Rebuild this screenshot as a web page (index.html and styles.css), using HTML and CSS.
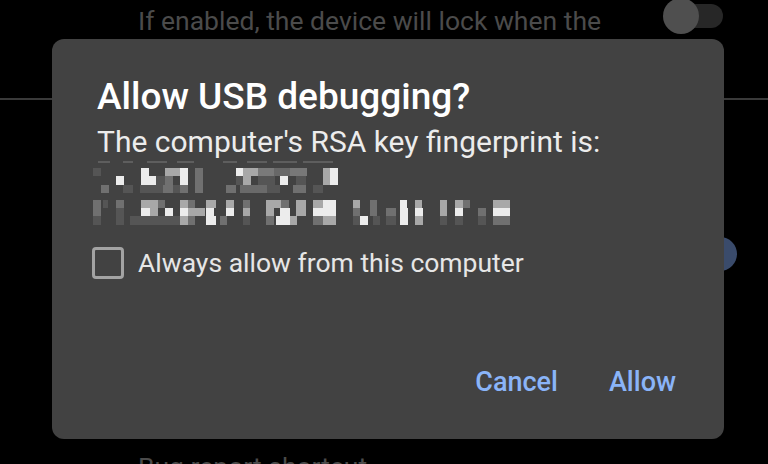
FILE: index.html
```html
<!DOCTYPE html>
<html lang="en">
<head>
<meta charset="utf-8">
<title>Allow USB debugging?</title>
<link rel="stylesheet" href="styles.css">
</head>
<body>
<div class="screen">
  <div class="settings">
    <div class="row-lock">
      <span class="bg-text lock-text">If enabled, the device will lock when the</span>
      <span class="toggle"><span class="track"></span><span class="thumb"></span></span>
    </div>
    <div class="divider"></div>
    <div class="row-circle"><span class="blue-dot"></span></div>
    <div class="row-bug"><span class="bg-text">Bug report shortcut</span></div>
  </div>

  <div class="dialog" role="dialog">
    <h1 class="title">Allow USB debugging?</h1>
    <p class="subtitle">The computer's RSA key fingerprint is:</p>
    <svg class="mosaic" width="420" height="68" viewBox="0 0 420 68" aria-hidden="true">
      <g fill="#5e5e5e">
        <rect x="5" y="3" width="12" height="2"/><rect x="30" y="3" width="10" height="2"/><rect x="54" y="3" width="20" height="2"/><rect x="84" y="3" width="17" height="2"/><rect x="130" y="3" width="14" height="2"/><rect x="154" y="3" width="20" height="2"/><rect x="180" y="3" width="24" height="2"/><rect x="210" y="3" width="30" height="2"/>
      </g>
      <!-- line 1 -->
      <g>
        <rect x="0" y="10" width="8" height="8" fill="#555"/>
        <rect x="48" y="10" width="8" height="8" fill="#ececec"/>
        <rect x="72" y="10" width="8" height="8" fill="#a8a8a8"/>
        <rect x="80" y="10" width="7" height="8" fill="#a8a8a8"/>
        <rect x="87" y="10" width="8" height="8" fill="#ececec"/>
        <rect x="102" y="10" width="8" height="8" fill="#707070"/>
        <rect x="143" y="10" width="7" height="8" fill="#ececec"/>
        <rect x="150" y="10" width="8" height="8" fill="#a8a8a8"/>
        <rect x="158" y="10" width="7" height="8" fill="#a8a8a8"/>
        <rect x="165" y="10" width="16" height="8" fill="#7a7a7a"/>
        <rect x="181" y="10" width="16" height="8" fill="#686868"/>
        <rect x="197" y="10" width="17" height="8" fill="#787878"/>
        <rect x="230" y="10" width="7" height="8" fill="#a8a8a8"/>
        <rect x="237" y="10" width="8" height="8" fill="#ececec"/>

        <rect x="23" y="18" width="8" height="9" fill="#ececec"/>
        <rect x="48" y="18" width="15" height="9" fill="#ececec"/>
        <rect x="63" y="18" width="9" height="9" fill="#555"/>
        <rect x="72" y="18" width="8" height="9" fill="#707070"/>
        <rect x="87" y="18" width="8" height="9" fill="#ececec"/>
        <rect x="102" y="18" width="8" height="9" fill="#707070"/>
        <rect x="143" y="18" width="7" height="9" fill="#555"/>
        <rect x="150" y="18" width="8" height="9" fill="#a8a8a8"/>
        <rect x="165" y="18" width="17" height="9" fill="#555"/>
        <rect x="187" y="18" width="8" height="9" fill="#ececec"/>
        <rect x="203" y="18" width="10" height="9" fill="#555"/>
        <rect x="230" y="18" width="7" height="9" fill="#a8a8a8"/>
        <rect x="237" y="18" width="8" height="9" fill="#ececec"/>

        <rect x="8" y="27" width="8" height="8" fill="#707070"/>
        <rect x="30" y="27" width="10" height="8" fill="#555"/>
        <rect x="47" y="27" width="23" height="8" fill="#555"/>
        <rect x="70" y="27" width="10" height="8" fill="#707070"/>
        <rect x="80" y="27" width="7" height="8" fill="#555"/>
        <rect x="87" y="27" width="8" height="8" fill="#707070"/>
        <rect x="102" y="27" width="8" height="8" fill="#707070"/>
        <rect x="133" y="27" width="10" height="8" fill="#707070"/>
        <rect x="147" y="27" width="27" height="8" fill="#6a6a6a"/>
        <rect x="174" y="27" width="13" height="8" fill="#555"/>
        <rect x="200" y="27" width="13" height="8" fill="#707070"/>
        <rect x="220" y="27" width="10" height="8" fill="#555"/>
      </g>
      <!-- line 2 -->
      <g>
        <rect x="0" y="42" width="8" height="8" fill="#707070"/>
        <rect x="10" y="42" width="5" height="8" fill="#555"/>
        <rect x="23" y="42" width="8" height="8" fill="#707070"/>
        <rect x="48" y="42" width="17" height="8" fill="#a8a8a8"/>
        <rect x="65" y="42" width="7" height="8" fill="#707070"/>
        <rect x="87" y="42" width="8" height="8" fill="#a8a8a8"/>
        <rect x="95" y="42" width="7" height="8" fill="#707070"/>
        <rect x="113" y="42" width="10" height="8" fill="#a8a8a8"/>
        <rect x="133" y="42" width="8" height="8" fill="#a8a8a8"/>
        <rect x="150" y="42" width="7" height="8" fill="#707070"/>
        <rect x="173" y="42" width="15" height="8" fill="#a8a8a8"/>
        <rect x="188" y="42" width="8" height="8" fill="#707070"/>
        <rect x="203" y="42" width="10" height="8" fill="#a8a8a8"/>
        <rect x="220" y="42" width="10" height="8" fill="#a8a8a8"/>
        <rect x="230" y="42" width="13" height="8" fill="#ececec"/>
        <rect x="260" y="42" width="7" height="8" fill="#a8a8a8"/>
        <rect x="277" y="42" width="7" height="8" fill="#707070"/>
        <rect x="307" y="42" width="7" height="8" fill="#ececec"/>
        <rect x="322" y="42" width="7" height="8" fill="#a8a8a8"/>
        <rect x="347" y="42" width="7" height="8" fill="#a8a8a8"/>
        <rect x="362" y="42" width="8" height="8" fill="#a8a8a8"/>
        <rect x="370" y="42" width="7" height="8" fill="#707070"/>
        <rect x="400" y="42" width="17" height="8" fill="#a8a8a8"/>

        <rect x="0" y="50" width="8" height="8" fill="#707070"/>
        <rect x="23" y="50" width="8" height="8" fill="#555"/>
        <rect x="48" y="50" width="9" height="8" fill="#ececec"/>
        <rect x="57" y="50" width="8" height="8" fill="#a8a8a8"/>
        <rect x="72" y="50" width="8" height="8" fill="#ececec"/>
        <rect x="87" y="50" width="8" height="8" fill="#ececec"/>
        <rect x="95" y="50" width="17" height="8" fill="#a8a8a8"/>
        <rect x="113" y="50" width="8" height="8" fill="#ececec"/>
        <rect x="133" y="50" width="8" height="8" fill="#ececec"/>
        <rect x="150" y="50" width="7" height="8" fill="#a8a8a8"/>
        <rect x="173" y="50" width="8" height="8" fill="#a8a8a8"/>
        <rect x="187" y="50" width="10" height="8" fill="#ececec"/>
        <rect x="203" y="50" width="10" height="8" fill="#a8a8a8"/>
        <rect x="220" y="50" width="23" height="8" fill="#ececec"/>
        <rect x="260" y="50" width="7" height="8" fill="#707070"/>
        <rect x="277" y="50" width="7" height="8" fill="#707070"/>
        <rect x="293" y="50" width="10" height="8" fill="#707070"/>
        <rect x="307" y="50" width="8" height="8" fill="#ececec"/>
        <rect x="322" y="50" width="8" height="8" fill="#ececec"/>
        <rect x="347" y="50" width="7" height="8" fill="#a8a8a8"/>
        <rect x="362" y="50" width="8" height="8" fill="#ececec"/>
        <rect x="385" y="50" width="8" height="8" fill="#707070"/>
        <rect x="400" y="50" width="17" height="8" fill="#ececec"/>

        <rect x="0" y="58" width="8" height="9" fill="#555"/>
        <rect x="23" y="58" width="8" height="9" fill="#555"/>
        <rect x="37" y="58" width="50" height="9" fill="#555"/>
        <rect x="87" y="58" width="8" height="9" fill="#a8a8a8"/>
        <rect x="95" y="58" width="7" height="9" fill="#707070"/>
        <rect x="113" y="58" width="10" height="9" fill="#ececec"/>
        <rect x="127" y="58" width="7" height="9" fill="#707070"/>
        <rect x="150" y="58" width="7" height="9" fill="#555"/>
        <rect x="173" y="58" width="8" height="9" fill="#707070"/>
        <rect x="183" y="58" width="14" height="9" fill="#ececec"/>
        <rect x="197" y="58" width="7" height="9" fill="#a8a8a8"/>
        <rect x="220" y="58" width="10" height="9" fill="#707070"/>
        <rect x="230" y="58" width="13" height="9" fill="#a8a8a8"/>
        <rect x="260" y="58" width="7" height="9" fill="#555"/>
        <rect x="267" y="58" width="8" height="9" fill="#ececec"/>
        <rect x="280" y="58" width="7" height="9" fill="#555"/>
        <rect x="293" y="58" width="10" height="9" fill="#555"/>
        <rect x="307" y="58" width="8" height="9" fill="#ececec"/>
        <rect x="322" y="58" width="8" height="9" fill="#a8a8a8"/>
        <rect x="347" y="58" width="7" height="9" fill="#555"/>
        <rect x="362" y="58" width="8" height="9" fill="#555"/>
        <rect x="385" y="58" width="8" height="9" fill="#555"/>
        <rect x="400" y="58" width="17" height="9" fill="#707070"/>
      </g>
    </svg>
    <label class="check-row">
      <span class="checkbox"></span>
      <span class="check-label">Always allow from this computer</span>
    </label>
    <div class="actions">
      <span class="btn">Cancel</span>
      <span class="btn">Allow</span>
    </div>
  </div>
</div>
</body>
</html>
```

FILE: styles.css
```css
html, body {
  margin: 0;
  padding: 0;
  background: #000;
}

.screen {
  position: relative;
  width: 768px;
  height: 464px;
  overflow: hidden;
  background: #000;
  font-family: Roboto, "Noto Sans", sans-serif;
}

/* dimmed settings list behind the dialog */
.settings {
  display: flex;
  flex-direction: column;
}

.bg-text {
  font-size: 26.5px;
  line-height: 32px;
  color: #4b4b4b;
  white-space: nowrap;
}

.row-lock {
  display: flex;
  align-items: center;
  height: 32px;
  padding-left: 138px;
  padding-right: 45px;
}

.lock-text {
  align-self: flex-start;
  margin-top: 5px;
}

.toggle {
  position: relative;
  margin-left: auto;
  width: 60px;
  height: 32px;
  display: flex;
  align-items: center;
}

.track {
  display: block;
  width: 56px;
  height: 24px;
  margin-left: 4px;
  border-radius: 12px;
  background: #272727;
}

.thumb {
  position: absolute;
  left: 0;
  top: -2px;
  width: 36px;
  height: 36px;
  border-radius: 50%;
  background: #4f4f4f;
}

.divider {
  margin-top: 66px;
  height: 2px;
  background: #3a3a3a;
}

.row-circle {
  display: flex;
  justify-content: flex-end;
  margin-top: 137px;
  padding-right: 31px;
}

.blue-dot {
  width: 34px;
  height: 34px;
  border-radius: 50%;
  background: #3a4b6b;
}

.row-bug {
  margin-top: 180px;
  padding-left: 138px;
}

/* dialog */
.dialog {
  position: absolute;
  left: 52px;
  top: 39px;
  width: 672px;
  height: 400px;
  box-sizing: border-box;
  padding: 36px 45px 42px;
  background: #424242;
  border-radius: 12px;
  display: flex;
  flex-direction: column;
}

.title {
  margin: 0;
  font-size: 37px;
  line-height: 44px;
  font-weight: 500;
  color: #ffffff;
}

.subtitle {
  margin: 5px 0 0;
  font-size: 30px;
  line-height: 36px;
  font-weight: 400;
  color: #ececec;
  white-space: nowrap;
}

.mosaic {
  display: block;
  margin: -2px 0 0 -4px;
}

.check-row {
  display: flex;
  align-items: center;
  gap: 14px;
  margin: 21px 0 0 -5px;
  height: 32px;
}

.checkbox {
  flex: none;
  box-sizing: border-box;
  width: 32px;
  height: 32px;
  border: 3px solid #a3a3a3;
  border-radius: 4px;
}

.check-label {
  font-size: 26.5px;
  line-height: 32px;
  color: #e6e6e6;
  white-space: nowrap;
}

.actions {
  margin-top: auto;
  display: flex;
  justify-content: flex-end;
  gap: 51px;
  padding-right: 3px;
}

.btn {
  font-size: 27px;
  line-height: 30px;
  font-weight: 500;
  color: #8ab4f8;
}
```
